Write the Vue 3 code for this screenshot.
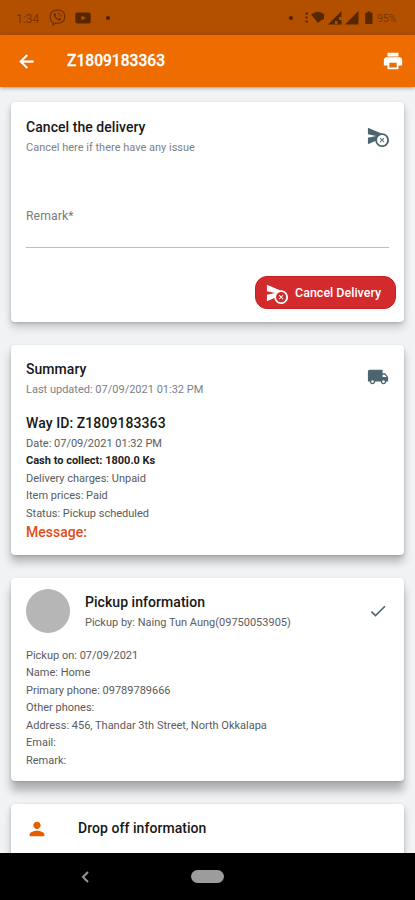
<script setup>
const icons = {
  cancelSend:
    'M16.5 9c-.42 0-.83.04-1.24.11L1.01 3 1 10l9 2-9 2 .01 7 8.07-3.46C9.59 21.19 12.71 24 16.5 24c4.14 0 7.5-3.36 7.5-7.5S20.64 9 16.5 9zm0 13c-3.03 0-5.5-2.47-5.5-5.5s2.47-5.5 5.5-5.5 5.5 2.47 5.5 5.5-2.47 5.5-5.5 5.5zM18.27 14.03l-1.77 1.76-1.77-1.76-.7.7 1.76 1.77-1.76 1.77.7.7 1.77-1.76 1.77 1.76.7-.7-1.76-1.77 1.76-1.77z',
  truck:
    'M20 8h-3V4H3c-1.1 0-2 .9-2 2v11h2c0 1.66 1.34 3 3 3s3-1.34 3-3h6c0 1.66 1.34 3 3 3s3-1.34 3-3h2v-5l-3-4zM6 18.5c-.83 0-1.5-.67-1.5-1.5s.67-1.5 1.5-1.5 1.5.67 1.5 1.5-.67 1.5-1.5 1.5zm13.5-9l1.96 2.5H17V9.5h2.500zM18 18.5c-.83 0-1.5-.67-1.5-1.5s.67-1.5 1.5-1.5 1.5.67 1.5 1.5-.67 1.5-1.5 1.5z',
  check: 'M9 16.17L4.83 12l-1.42 1.41L9 19 21 7l-1.41-1.41z',
  person: 'M12 12c2.21 0 4-1.790 4-4s-1.790-4-4-4-4 1.790-4 4 1.790 4 4 4zm0 2c-2.670 0-8 1.340-8 4v2h16v-2c0-2.660-5.330-4-8-4z',
  back: 'M20 11H7.83l5.59-5.59L12 4l-8 8 8 8 1.410-1.410L7.830 13H20z',
  print: 'M19 8H5c-1.660 0-3 1.340-3 3v6h4v4h12v-4h4v-6c0-1.660-1.340-3-3-3zm-3 11H8v-5h8v5zM18 3H6v4h12V3z',
}
const pickup = [
  'Pickup on: 07/09/2021',
  'Name: Home',
  'Primary phone: 09789789666',
  'Other phones:',
  'Address: 456, Thandar 3th Street, North Okkalapa',
  'Email:',
  'Remark:',
]
</script>

<template>
  <div class="screen">
    <div class="status">
      <span class="time">1:34</span>
      <svg class="viber" viewBox="0 0 16 16">
        <path d="M8 1C3.500 1 1.200 2.800 1.200 7.300c0 3 .9 4.700 2.600 5.500v2.400l2.300-1.900c5.600.5 8.700-1.300 8.700-6C14.800 2.800 12.500 1 8 1z" fill="none" stroke="currentColor" stroke-width="1.200" />
        <path d="M4.600 4.200c.9-1 1.500-.4 2.200.9.300.7-.7 1-.5 1.600.5 1.300 1.300 2 2.400 2.300.6 0 .8-1 1.600-.7 1.500.8 1.700 1.300.8 2.200-.9.900-2.200.4-3.800-.7-2-1.500-3.500-4.300-2.700-5.600z" fill="currentColor" />
        <path d="M8.200 3.500c2.300.1 3.600 1.500 3.700 3.800M8.500 5.200c1.100.1 1.700.8 1.800 1.800" fill="none" stroke="currentColor" stroke-width=".8" />
      </svg>
      <svg class="tube" viewBox="0 0 16 12">
        <path fill-rule="evenodd" d="M2 .5h12q1.700 0 1.700 2v7q0 2-1.700 2H2q-1.700 0-1.700-2v-7q0-2 1.700-2zM6.500 3.500v5L10.800 6z" fill="currentColor" />
      </svg>
      <i class="dot"></i>
      <i class="spacer"></i>
      <i class="dot dot-right"></i>
      <svg class="signals" viewBox="0 0 70 16">
        <g fill="currentColor">
          <path d="M.5 2.500H3v2H.5zM.5 6.500h2v2h-2zM.5 10.500H3v2H.5z" />
          <path d="M6 4.500Q13-1 19.500 4.500l-.5 1v4h-2L13 13z" />
          <path fill-rule="evenodd" d="M23 14.500L36.500 1v6H34v3h2.500v4.500zM30 11v3h2.500v-3z" />
          <path d="M40 14.500L53.500 1v13.500z" />
          <path d="M62.500 1.500h3v1.300h2V14h-7.200V2.800h2.200z" />
        </g>
      </svg>
      <span class="battery">95%</span>
    </div>

    <header class="appbar">
      <svg class="back" viewBox="0 0 24 24"><path :d="icons.back" /></svg>
      <h1>Z1809183363</h1>
      <svg class="print" viewBox="0 0 24 24"><path :d="icons.print" /></svg>
    </header>

    <main>
      <section class="card cancel">
        <div class="head">
          <div>
            <h2>Cancel the delivery</h2>
            <p class="sub">Cancel here if there have any issue</p>
          </div>
          <svg class="icon" viewBox="0 0 24 24"><path :d="icons.cancelSend" /></svg>
        </div>
        <div class="field">Remark*</div>
        <button class="danger">
          <svg viewBox="0 0 24 24"><path :d="icons.cancelSend" /></svg>
          <span>Cancel Delivery</span>
        </button>
      </section>

      <section class="card summary">
        <div class="head">
          <div>
            <h2>Summary</h2>
            <p class="sub">Last updated: 07/09/2021 01:32 PM</p>
          </div>
          <svg class="icon" viewBox="0 0 24 24"><path :d="icons.truck" /></svg>
        </div>
        <h3>Way ID: Z1809183363</h3>
        <div class="lines">
          <p>Date: 07/09/2021 01:32 PM</p>
          <p class="cash">Cash to collect: 1800.0 Ks</p>
          <p>Delivery charges: Unpaid</p>
          <p>Item prices: Paid</p>
          <p>Status: Pickup scheduled</p>
        </div>
        <p class="message">Message:</p>
      </section>

      <section class="card pickup">
        <div class="head">
          <i class="avatar"></i>
          <div class="grow">
            <h2>Pickup information</h2>
            <p class="sub dark">Pickup by: Naing Tun Aung(09750053905)</p>
          </div>
          <svg class="icon tick" viewBox="0 0 24 24"><path :d="icons.check" /></svg>
        </div>
        <div class="lines">
          <p v-for="line in pickup" :key="line">{{ line }}</p>
        </div>
      </section>

      <section class="card drop">
        <svg class="person" viewBox="0 0 24 24"><path :d="icons.person" /></svg>
        <h2>Drop off information</h2>
      </section>
    </main>

    <nav>
      <svg viewBox="0 0 10 14"><path d="M8 2L3 7 8 12" fill="none" stroke="#969696" stroke-width="2" /></svg>
      <i class="home"></i>
    </nav>
  </div>
</template>

<style>
body {
  margin: 0;
}
</style>

<style scoped>
* {
  box-sizing: border-box;
}
h1, h2, h3, p {
  margin: 0;
  font-weight: 500;
  white-space: nowrap;
}
.screen {
  width: 415px;
  height: 900px;
  overflow: hidden;
  display: flex;
  flex-direction: column;
  background: #f1f2f4;
  color: #171717;
  font-family: Roboto, sans-serif;
}
svg {
  display: block;
  flex: none;
}
.status {
  height: 35px;
  flex: none;
  display: flex;
  align-items: center;
  padding: 0 16px;
  background: #b35000;
  color: #572700;
}
.time {
  width: 33px;
  padding-top: 1px;
  color: #7a3600;
  font-size: 12.5px;
  letter-spacing: -0.3px;
}
.viber {
  width: 17px;
  height: 17px;
  color: #713200;
}
.tube {
  width: 16px;
  height: 12px;
  margin-left: 9px;
}
.dot {
  width: 4px;
  height: 4px;
  margin-left: 15px;
  border-radius: 50%;
  background: #4d2200;
}
.dot-right {
  margin: 0 12px 0 0;
}
.spacer {
  flex: 1;
}
.signals {
  width: 70px;
  height: 16px;
}
.battery {
  width: 22px;
  margin-left: 2px;
  padding-top: 2px;
  color: #7a3600;
  font-size: 10.8px;
  letter-spacing: -0.2px;
}
.appbar {
  position: relative;
  z-index: 1;
  height: 52px;
  flex: none;
  display: flex;
  align-items: center;
  padding: 0 11px 0 16px;
  background: #ef6c00;
  box-shadow: 0 1px 4px rgba(0, 0, 0, 0.35);
  color: #fff;
  fill: #fff;
}
.back {
  width: 21px;
  height: 21px;
  stroke: #fff;
  stroke-width: 0.5;
}
.print {
  width: 22px;
  height: 22px;
}
h1 {
  flex: 1;
  margin-left: 30px;
  font-size: 15.6px;
  -webkit-text-stroke: 0.3px #fff;
}
main {
  flex: 1;
  min-height: 0;
  overflow: hidden;
  padding: 15px 11px 0 11px;
}
.card {
  background: #fff;
  border-radius: 4px;
  padding: 0 15px;
  box-shadow: 0 5px 8px rgba(0, 0, 0, 0.2), 0 1px 3px rgba(0, 0, 0, 0.16);
}
.head {
  display: flex;
  justify-content: space-between;
}
h2 {
  font-size: 14px;
  line-height: 18px;
  letter-spacing: 0.05px;
}
.sub {
  margin-top: 4px;
  font-size: 11px;
  line-height: 16px;
  font-weight: 400;
  color: #7c8187;
}
.icon {
  width: 22px;
  height: 22px;
  fill: #4b6670;
}
.cancel {
  height: 220px;
  padding-top: 16px;
}
.cancel .icon {
  margin-top: 7px;
}
.field {
  height: 92px;
  padding-top: 48px;
  border-bottom: 1px solid #bebebe;
  font-size: 12.2px;
  line-height: 24px;
  letter-spacing: 0.1px;
  color: #7b7b7b;
}
.danger {
  display: flex;
  align-items: center;
  width: 141px;
  height: 33px;
  margin: 28px -7px 0 auto;
  padding: 0 0 0 10px;
  border: 1px solid #c51f22;
  border-radius: 12px;
  background: #d32a2d;
  color: #fff;
  fill: #fff;
  font: 500 12.5px Roboto, sans-serif;
  white-space: nowrap;
}
.danger svg {
  width: 22px;
  height: 22px;
  margin-right: 7px;
}
.summary {
  height: 210px;
  margin-top: 23px;
  padding-top: 14.5px;
  box-shadow: 0 7px 9px rgba(0, 0, 0, 0.25), 0 1px 3px rgba(0, 0, 0, 0.16);
}
.summary .icon {
  margin-top: 6.500px;
}
h3 {
  margin-top: 15.5px;
  font-size: 14px;
  line-height: 20px;
  letter-spacing: 0.08px;
}
.lines {
  font-size: 11px;
  line-height: 17.6px;
  color: #5a5a5a;
}
.lines p {
  font-weight: 400;
}
.lines .cash {
  font-weight: 700;
  color: #222;
}
.summary .lines {
  margin-top: 1.5px;
}
.message {
  margin-top: 0.5px;
  color: #e34b19;
  font-size: 14px;
  line-height: 18px;
}
.pickup {
  height: 203.5px;
  margin-top: 22.5px;
  padding-top: 11px;
  box-shadow: 0 10px 9px rgba(0, 0, 0, 0.27), 0 1px 3px rgba(0, 0, 0, 0.16);
}
.avatar {
  width: 44px;
  height: 44px;
  border-radius: 50%;
  background: #b6b6b6;
}
.grow {
  flex: 1;
  margin-left: 15px;
  padding-top: 4.500px;
}
.dark {
  color: #5c5c5c;
}
.pickup .tick {
  width: 20px;
  height: 20px;
  margin: 12px 1px 0 0;
}
.pickup .lines {
  margin-top: 14px;
}
.drop {
  height: 100px;
  margin-top: 22.5px;
  padding: 14px 15px 0;
  display: flex;
  align-items: flex-start;
}
.person {
  width: 22px;
  height: 22px;
  fill: #e85d00;
}
.drop h2 {
  margin: 1px 0 0 30px;
}
nav {
  position: relative;
  z-index: 1;
  height: 47px;
  flex: none;
  display: flex;
  align-items: center;
  padding-left: 80px;
  background: #000;
}
nav svg {
  width: 10px;
  height: 14px;
}
.home {
  width: 33px;
  height: 13px;
  margin-left: 101px;
  border-radius: 7px;
  background: #9c9c9c;
}
</style>
